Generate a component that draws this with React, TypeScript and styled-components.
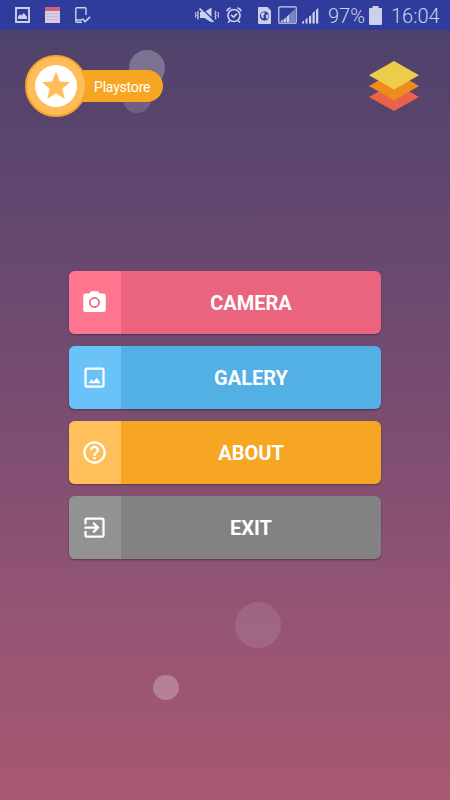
import type { ReactNode } from 'react';
import styled, { createGlobalStyle } from 'styled-components';
import { MdCropOriginal, MdExitToApp, MdHelpOutline } from 'react-icons/md';

export default function App() {
  return (
    <>
      <GlobalStyle />
      <Screen>
        <StatusBar />
        <Bubble $x={147} $y={68} $r={18.2} $alpha={0.25} />
        <Bubble $x={137} $y={99} $r={14} $alpha={0.15} />
        <Bubble $x={258} $y={625} $r={23} $alpha={0.1} />
        <Bubble $x={166} $y={687.3} $r={12.6} $alpha={0.25} />
        <Header>
          <PlaystoreBadge>
            <BadgeCircle>
              <StarDisc>
                <svg width="42" height="42" viewBox="0 0 42 42">
                  <path
                    d="M21 7l3.9 9.4 10.1.8-7.7 6.6 2.4 9.9-8.7-5.3-8.7 5.3 2.4-9.9L7 17.2l10.1-.8z"
                    fill="#ffbd59"
                  />
                </svg>
              </StarDisc>
            </BadgeCircle>
            <BadgeLabel>Playstore</BadgeLabel>
          </PlaystoreBadge>
          <Logo width="50" height="50" viewBox="0 0 50 50">
            <path d="M0 36l25-14.5L50 36 25 50z" fill="#ea6248" />
            <path d="M0 25l25-14.5L50 25 25 39.3z" fill="#ed8b1c" />
            <path d="M0 14.3L25 0l25 14.3-25 14.3z" fill="#edcc4b" />
          </Logo>
        </Header>
        <Menu>
          <MenuItem label="CAMERA" icon={<CameraIcon />} color="#eb647d" light="#ff778f" />
          <MenuItem label="GALERY" icon={<MdCropOriginal />} color="#53b0e5" light="#69c3f8" />
          <MenuItem label="ABOUT" icon={<MdHelpOutline />} color="#f7a623" light="#ffc05c" />
          <MenuItem label="EXIT" icon={<MdExitToApp />} color="#828282" light="#929292" />
        </Menu>
      </Screen>
    </>
  );
}

interface MenuItemProps {
  label: string;
  icon: ReactNode;
  color: string;
  light: string;
}

function MenuItem({ label, icon, color, light }: MenuItemProps) {
  return (
    <MenuButton $color={color}>
      <MenuIcon $color={light}>{icon}</MenuIcon>
      <MenuLabel>{label}</MenuLabel>
    </MenuButton>
  );
}

function CameraIcon() {
  return (
    <svg viewBox="0 0 24 24">
      <path
        d="M9 2L7.2 4H4q-2 0-2 2v12.5q0 2 2 2h16q2 0 2-2V6q0-2-2-2h-3.2L15 2z"
        fill="currentColor"
      />
      <circle cx="12" cy="12" r="4.1" fill="none" stroke="#eb647d" strokeWidth="1.5" />
    </svg>
  );
}

function StatusBar() {
  return (
    <StatusBarContainer>
      <NotificationIcons>
        <svg width="15" height="16" viewBox="0 0 15 16">
          <path d="M1 1h13v14H1z" fill="none" stroke="currentColor" strokeWidth="1.9" />
          <path d="M3 12V9.5l2-2.2 1.5 1.3L8.8 6l3.2 3.8V12z" fill="currentColor" />
        </svg>
        <svg width="15" height="16" viewBox="0 0 15 16">
          <path d="M0 0h15v16H0z" fill="#d7cce0" />
          <path d="M0 0h15v4H0z" fill="#d4607e" />
          <path d="M1 6.5h13M1 9.5h13M1 12.5h13" stroke="#c4b4d0" strokeWidth=".8" />
        </svg>
        <svg width="16" height="16" viewBox="0 0 16 16">
          <path
            d="M11 8V1.7q0-.9-.9-.9H1.7q-.9 0-.9.9v12.6q0 .9.9.9H7M1 13h6"
            fill="none"
            stroke="currentColor"
            strokeWidth="1.4"
          />
          <path d="M7.3 11.5l2.8 3 5-4.7" fill="none" stroke="currentColor" strokeWidth="1.6" />
        </svg>
      </NotificationIcons>
      <SystemIcons>
        <svg width="24" height="16" viewBox="0 0 24 16">
          <path d="M5 5h4.5L16.5.5v15L9.5 11H5z" fill="currentColor" />
          <path d="M5.8.6l13 12.6" stroke="#303c9c" strokeWidth="1.4" />
          <path d="M4.5 1.6l14 13.4" stroke="currentColor" strokeWidth="1.7" />
          <path
            d="M3.5 4l-1 1.4 1 1.4-1 1.4 1 1.4-1 1.4 1 1.4M1 5.3l-.5 1.3.5 1.3-.5 1.3.5 1.3M20 4l1 1.4-1 1.4 1 1.4-1 1.4 1 1.4-1 1.4M23 5.3l.5 1.3-.5 1.3.5 1.3-.5 1.3"
            fill="none"
            stroke="currentColor"
            strokeWidth="1.1"
          />
        </svg>
        <Spacer $width={7} />
        <svg width="16" height="16" viewBox="0 0 16 16">
          <g fill="none" stroke="currentColor" strokeWidth="1.7">
            <circle cx="8" cy="8.5" r="6" />
            <path d="M.8 4.3Q1.5 1.7 4.5.9M15.2 4.3Q14.5 1.7 11.5.9M4 13.5l-2 2M12 13.5l2 2M5 7.8l2.6 2.3 3.5-3.5" />
          </g>
        </svg>
        <Spacer $width={16} />
        <svg width="13" height="17" viewBox="0 0 13 17">
          <path d="M1 0h8.5L13 3.5V16q0 1-1 1H1q-1 0-1-1V1q0-1 1-1z" fill="currentColor" />
          <circle cx="6.5" cy="9" r="4.6" fill="#303c9c" />
          <path
            d="M3 6.5l2.3-1.2L7 6 6 8.2l-1 .3.8 1.8-.8 1.5-1.7-2zM8.3 8l2-1 .4 2.4-1.5 2.5-1.5-.8.7-1.4-.8-.9z"
            fill="currentColor"
          />
        </svg>
        <Spacer $width={7} />
        <svg width="19" height="18" viewBox="0 0 19 18">
          <rect x=".8" y=".8" width="17.4" height="16.4" rx="1" fill="none" stroke="currentColor" strokeWidth="1.2" />
          <path d="M3 16L17 3v13z" fill="#7c84c2" />
          <path d="M3 16v-1.5l1.5-1V16zM6 16v-3l1.8-1.6V16zM9 16v-5.5l2-2V16z" fill="currentColor" />
        </svg>
        <Spacer $width={5} />
        <svg width="17" height="17" viewBox="0 0 17 17">
          <path
            d="M0 16.5V15l2-1.5v3zM3.5 16.5v-4.3l2-1.5v5.8zM7 16.5V9.8L9.2 8v8.5zM10.5 16.5V6l2.3-2v12.5zM14 16.5V3L16.3.7v15.8z"
            fill="currentColor"
          />
        </svg>
        <Spacer $width={9} />
        <StatusText $width={41}>97%</StatusText>
        <svg width="13" height="19" viewBox="0 0 13 19">
          <path d="M3.5 0h6v2H12q1 0 1 1v15q0 1-1 1H1q-1 0-1-1V3q0-1 1-1h2.5z" fill="currentColor" />
        </svg>
        <Spacer $width={9} />
        <StatusText $width={50}>16:04</StatusText>
      </SystemIcons>
    </StatusBarContainer>
  );
}

const GlobalStyle = createGlobalStyle`
  * {
    box-sizing: border-box;
  }
  body {
    margin: 0;
    font-family: Roboto, sans-serif;
  }
`;

const Screen = styled.main`
  position: relative;
  display: flex;
  flex-direction: column;
  width: 100%;
  height: 800px;
  overflow: hidden;
  background: linear-gradient(#4b416b 0%, #6a4970 35%, #7c4d71 53%, #945474 76%, #a95872 100%);
`;

const StatusBarContainer = styled.div`
  display: flex;
  justify-content: space-between;
  align-items: center;
  flex-shrink: 0;
  height: 30px;
  padding: 0 9px 0 15px;
  background-color: #303c9c;
  color: #cdd0ea;
`;

const NotificationIcons = styled.div`
  display: flex;
  column-gap: 15px;
`;

const SystemIcons = styled.div`
  display: flex;
  align-items: center;
`;

const Spacer = styled.span<{ $width: number }>`
  width: ${(props) => props.$width}px;
`;

const StatusText = styled.span<{ $width: number }>`
  width: ${(props) => props.$width}px;
  margin-top: 1px;
  font-size: 20px;
  font-weight: 300;
  line-height: 24px;
  white-space: nowrap;
`;

const Bubble = styled.div<{ $x: number; $y: number; $r: number; $alpha: number }>`
  position: absolute;
  left: ${(props) => props.$x - props.$r}px;
  top: ${(props) => props.$y - props.$r}px;
  width: ${(props) => props.$r * 2}px;
  height: ${(props) => props.$r * 2}px;
  border-radius: 50%;
  background-color: rgba(255, 255, 255, ${(props) => props.$alpha});
`;

const Header = styled.header`
  display: flex;
  justify-content: space-between;
  align-items: center;
  height: 62px;
  margin-top: 25px;
  padding: 0 31px 0 25px;
`;

const PlaystoreBadge = styled.div`
  display: flex;
  align-items: center;
  z-index: 1;
`;

const BadgeCircle = styled.div`
  display: flex;
  justify-content: center;
  align-items: center;
  width: 62px;
  height: 62px;
  z-index: 1;
  border: 2px solid #f5a32a;
  border-radius: 50%;
  background-color: #ffbd59;
`;

const StarDisc = styled.div`
  width: 42px;
  height: 42px;
  border-radius: 50%;
  background-color: #fff;
`;

const BadgeLabel = styled.span`
  width: 100px;
  height: 32px;
  margin-left: -24px;
  padding-left: 31px;
  border-radius: 0 16px 16px 0;
  background-color: #f7a623;
  color: #fff;
  font-size: 14px;
  letter-spacing: -0.2px;
  line-height: 34px;
`;

const Logo = styled.svg`
  display: block;
`;

const Menu = styled.nav`
  display: flex;
  flex-direction: column;
  row-gap: 12.5px;
  margin: 154px 68.7px 0;
`;

const MenuButton = styled.button<{ $color: string }>`
  display: flex;
  height: 62.5px;
  padding: 0;
  border: 0;
  border-radius: 6px;
  overflow: hidden;
  background-color: ${(props) => props.$color};
  box-shadow: 0 1px 2px rgba(30, 15, 50, 0.45);
  color: #fff;
  font-family: inherit;
`;

const MenuIcon = styled.span<{ $color: string }>`
  display: flex;
  justify-content: center;
  align-items: center;
  width: 52px;
  height: 100%;
  background-color: ${(props) => props.$color};

  svg {
    width: 27px;
    height: 27px;
  }
`;

const MenuLabel = styled.span`
  flex: 1;
  align-self: center;
  padding-top: 1px;
  font-size: 20px;
  font-weight: 700;
  text-align: center;
`;
